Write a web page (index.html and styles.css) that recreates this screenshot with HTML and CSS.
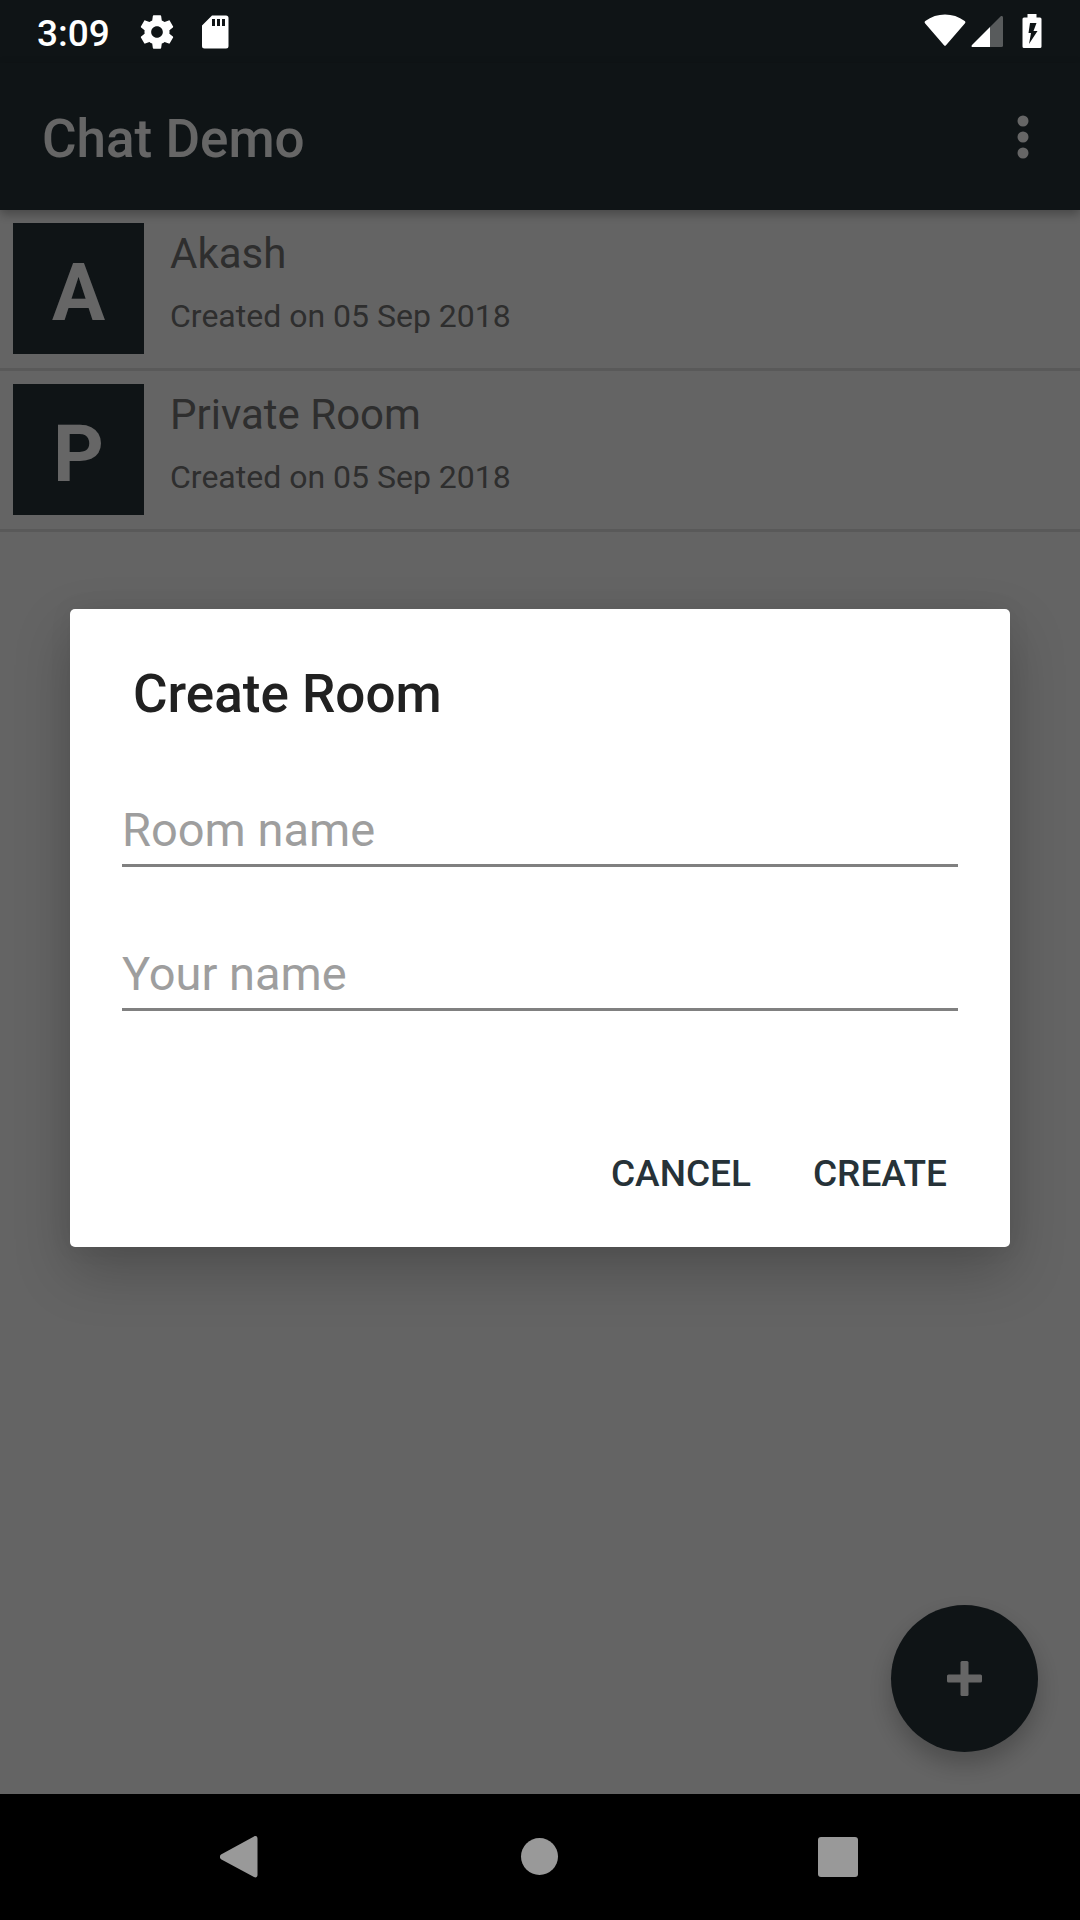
FILE: index.html
```html
<!DOCTYPE html>
<html lang="en">
<head>
<meta charset="utf-8">
<meta name="viewport" content="width=device-width, initial-scale=1">
<title>Chat Demo</title>
<link rel="stylesheet" href="styles.css">
</head>
<body>
<div class="status-bar">
  <div class="status-left">
    <span class="clock">3:09</span>
    <svg class="status-icon" viewBox="0 0 24 24" aria-hidden="true"><path d="M19.43 12.98c.04-.32.07-.64.07-.98s-.03-.66-.07-.98l2.11-1.65c.19-.15.24-.42.12-.64l-2-3.46c-.12-.22-.39-.3-.61-.22l-2.49 1c-.52-.4-1.08-.73-1.69-.98l-.38-2.65C14.46 2.18 14.25 2 14 2h-4c-.25 0-.46.18-.49.42l-.38 2.65c-.61.25-1.17.59-1.69.98l-2.49-1c-.23-.09-.49 0-.61.22l-2 3.46c-.13.22-.07.49.12.64l2.11 1.65c-.04.32-.07.65-.07.98s.03.66.07.98l-2.11 1.65c-.19.15-.24.42-.12.64l2 3.46c.12.22.39.3.61.22l2.49-1c.52.4 1.08.73 1.69.98l.38 2.65c.03.24.24.42.49.42h4c.25 0 .46-.18.49-.42l.38-2.65c.61-.25 1.17-.59 1.69-.98l2.49 1c.23.09.49 0 .61-.22l2-3.46c.12-.22.07-.49-.12-.64l-2.11-1.65zM12 15.5c-1.93 0-3.5-1.57-3.5-3.5s1.57-3.5 3.5-3.5 3.5 1.57 3.5 3.5-1.57 3.5-3.5 3.5z"/></svg>
    <svg class="status-icon" viewBox="0 0 40 40" aria-hidden="true"><path fill-rule="evenodd" d="M17 3.5h14a2.5 2.5 0 0 1 2.5 2.5v28a2.5 2.5 0 0 1-2.5 2.5H9.500A2.5 2.5 0 0 1 7 34V13.5zM17 7v7h3V7zM22 7v7h3V7zM27 7v7h3V7z"/></svg>
  </div>
  <div class="status-right">
    <svg class="wifi" viewBox="0 0 42 34" aria-hidden="true"><path d="M1.2 9.500C.4 8.700.5 7.600 1.300 7 13-1.600 29-1.600 40.700 7c.8.600.9 1.700.1 2.500L22 31.200c-.6.700-1.400.7-2 0z"/></svg>
    <svg class="signal" viewBox="0 0 32 32" aria-hidden="true"><path class="signal-empty" d="M19 12 29.500 1.400c1-1 2.500-.4 2.500 1V30.500a1.500 1.500 0 0 1-1.500 1.500H19z"/><path d="M19 12V32H1.800C.4 32 .1 30.800 1 29.900z"/></svg>
    <svg class="battery" viewBox="0 0 20 34" aria-hidden="true"><path fill-rule="evenodd" d="M5.500 0h9v3.500H18a1.500 1.500 0 0 1 1.500 1.500v27.500A1.500 1.500 0 0 1 18 34H2a1.500 1.500 0 0 1-1.500-1.500V5A1.500 1.500 0 0 1 2 3.500h3.500zM8 9 6.500 19H9L7 30l8.500-13h-4L14.500 9z"/></svg>
  </div>
</div>

<div class="app">
  <header class="toolbar">
    <h1 class="toolbar-title">Chat Demo</h1>
    <button class="menu-button" type="button" aria-label="More options">
      <svg class="menu-icon" viewBox="0 0 12 44" aria-hidden="true"><circle cx="6" cy="6" r="5.500"/><circle cx="6" cy="22" r="5.500"/><circle cx="6" cy="38" r="5.500"/></svg>
    </button>
  </header>
  <main>
    <ul class="rooms">
      <li class="room">
        <span class="avatar">A</span>
        <div class="room-text">
          <span class="room-name">Akash</span>
          <span class="room-date">Created on 05 Sep 2018</span>
        </div>
      </li>
      <li class="room">
        <span class="avatar">P</span>
        <div class="room-text">
          <span class="room-name">Private Room</span>
          <span class="room-date">Created on 05 Sep 2018</span>
        </div>
      </li>
    </ul>
  </main>
  <button class="fab" type="button" aria-label="Add room">
    <svg class="fab-icon" viewBox="0 0 35 35" aria-hidden="true"><rect x="13.500" width="8" height="35" rx="1.500"/><rect y="13.500" width="35" height="8" rx="1.500"/></svg>
  </button>

  <div class="scrim">
    <form class="dialog" role="dialog" aria-labelledby="dialog-title">
      <h2 class="dialog-title" id="dialog-title">Create Room</h2>
      <div class="fields">
        <input class="field" type="text" placeholder="Room name" aria-label="Room name">
        <input class="field" type="text" placeholder="Your name" aria-label="Your name">
      </div>
      <div class="actions">
        <button class="action" type="button">CANCEL</button>
        <button class="action" type="button">CREATE</button>
      </div>
    </form>
  </div>
</div>

<nav class="nav-bar" aria-label="System navigation">
  <button class="nav-button" type="button" aria-label="Back">
    <svg class="nav-icon" viewBox="0 0 44 44" aria-hidden="true"><path d="M1 24.200c-1.600-1.400-1.600-3.300 0-4.700L34 1.500c1.700-1 3.500-.2 3.500 2v36.500c0 2.200-1.800 3-3.500 2z"/></svg>
  </button>
  <button class="nav-button" type="button" aria-label="Home">
    <svg class="nav-icon" viewBox="0 0 44 44" aria-hidden="true"><circle cx="21.500" cy="21.500" r="18.500"/></svg>
  </button>
  <button class="nav-button" type="button" aria-label="Recent apps">
    <svg class="nav-icon" viewBox="0 0 44 44" aria-hidden="true"><rect x="2" y="2" width="40" height="40" rx="3"/></svg>
  </button>
</nav>
</body>
</html>
```
FILE: styles.css
```css
* {
  box-sizing: border-box;
}

body {
  margin: 0;
  min-height: 100vh;
  display: flex;
  flex-direction: column;
  background: #000;
  font-family: Roboto, "Liberation Sans", sans-serif;
}

button {
  border: 0;
  padding: 0;
  background: none;
  font: inherit;
}

svg {
  display: block;
  flex: none;
}

/* System status bar */
.status-bar {
  display: flex;
  justify-content: space-between;
  height: 63px;
  padding: 0 38px 0 37px;
  background: #0f1416;
  color: #fff;
  fill: #fff;
}

.status-left,
.status-right {
  display: flex;
  align-items: center;
}

.status-left {
  gap: 18px;
}

.status-right {
  gap: 5px;
  padding-bottom: 1px;
}

.clock {
  padding: 5px 9px 0 0;
  font-size: 37px;
  font-weight: 500;
  line-height: 44px;
}

.status-icon {
  width: 40px;
  height: 40px;
}

.wifi {
  width: 42px;
  height: 34px;
}

.signal {
  width: 32px;
  height: 32px;
}

.signal-empty {
  fill: #585b5c;
}

.battery {
  width: 20px;
  height: 34px;
  margin-left: 14px;
}

/* App screen */
.app {
  position: relative;
  flex: 1;
  background: #fafafa;
}

.toolbar {
  position: relative;
  display: flex;
  align-items: center;
  justify-content: space-between;
  height: 147px;
  padding: 0 42px;
  background: #263238;
  color: #fff;
  box-shadow: 0 4px 10px rgba(0, 0, 0, 0.3);
}

.toolbar-title {
  margin: 0;
  padding-top: 4px;
  font-size: 53px;
  font-weight: 500;
  line-height: 62px;
}

.menu-button {
  padding: 0 9px;
}

.menu-icon {
  width: 12px;
  height: 44px;
  fill: #fff;
}

.rooms {
  margin: 0;
  padding: 0;
  list-style: none;
}

.room {
  display: flex;
  gap: 26px;
  padding: 13px 13px 14px;
  border-bottom: 3px solid #dedede;
}

.avatar {
  display: flex;
  flex: none;
  align-items: center;
  justify-content: center;
  width: 131px;
  height: 131px;
  padding-top: 8px;
  background: #263238;
  color: #fff;
  font-size: 79px;
  font-weight: 700;
}

.room-text {
  display: flex;
  flex-direction: column;
  gap: 18px;
  padding-top: 6px;
  color: #737373;
}

.room-name {
  font-size: 42px;
  line-height: 50px;
}

.room-date {
  font-size: 32px;
  line-height: 38px;
}

.fab {
  position: absolute;
  right: 42px;
  bottom: 42px;
  display: flex;
  align-items: center;
  justify-content: center;
  width: 147px;
  height: 147px;
  border-radius: 50%;
  background: #263238;
  box-shadow: 0 12px 24px rgba(0, 0, 0, 0.24);
}

.fab-icon {
  width: 35px;
  height: 35px;
  fill: #fff;
}

/* Create room dialog */
.scrim {
  position: absolute;
  inset: 0;
  display: flex;
  align-items: center;
  justify-content: center;
  padding: 0 70px 1px;
  background: rgba(0, 0, 0, 0.6);
}

.dialog {
  flex: 1;
  padding: 54px 42px 31px;
  border-radius: 5px;
  background: #fff;
  box-shadow: 0 24px 56px rgba(0, 0, 0, 0.22), 0 0 24px rgba(0, 0, 0, 0.06);
}

.dialog-title {
  margin: 0 0 76px;
  padding-left: 21px;
  color: #212121;
  font-size: 53px;
  font-weight: 500;
  line-height: 62px;
}

.fields {
  display: flex;
  flex-direction: column;
  gap: 78px;
  padding: 0 10px;
}

.field {
  width: 100%;
  height: 66px;
  padding: 0 0 7px;
  border: 0;
  border-bottom: 3px solid #808080;
  border-radius: 0;
  outline: 0;
  background: none;
  color: #212121;
  font: 47px/56px Roboto, "Liberation Sans", sans-serif;
}

.field::placeholder {
  color: #9e9e9e;
  opacity: 1;
}

.actions {
  display: flex;
  justify-content: flex-end;
  gap: 20px;
  margin-top: 121px;
}

.action {
  padding: 20px 21px;
  color: #263238;
  font-size: 37px;
  font-weight: 500;
  line-height: 44px;
}

/* System navigation bar */
.nav-bar {
  display: flex;
  align-items: center;
  justify-content: center;
  gap: 88px;
  height: 126px;
  background: #000;
}

.nav-button {
  display: flex;
  align-items: center;
  justify-content: center;
  width: 210px;
  height: 126px;
}

.nav-icon {
  width: 44px;
  height: 44px;
  fill: #999;
}
```
